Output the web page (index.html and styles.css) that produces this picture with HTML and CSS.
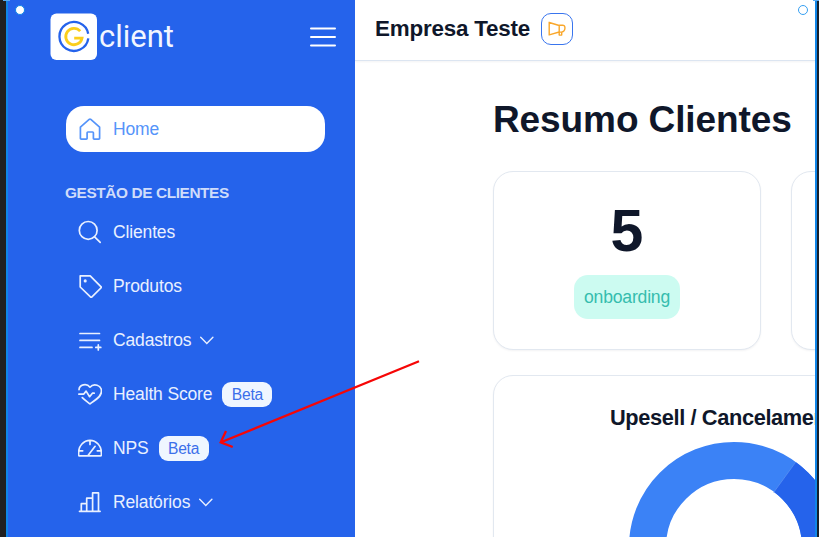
FILE: index.html
```html
<!DOCTYPE html>
<html lang="pt-BR">
<head>
<meta charset="utf-8">
<title>Gclient</title>
<link rel="stylesheet" href="styles.css">
</head>
<body>
<div class="app">
  <aside class="sidebar">
    <div class="brand">
      <svg class="mark" viewBox="0 0 47 47" fill="none">
        <rect x=".5" y=".5" width="46.500" height="46.500" rx="6" fill="#fff"/>
        <path d="M38.200 20.800A14.500 14.500 0 1 0 38.300 25.400" stroke="#2563eb" stroke-width="2.300"/>
        <path d="M30.200 18.200A8.200 8.200 0 1 0 32 25.200H24.200" stroke="#fbce1b" stroke-width="2.800"/>
      </svg>
      <span class="wordmark">client</span>
      <svg class="burger" viewBox="0 0 26 22" stroke="#fff" stroke-width="2" stroke-linecap="round"><path d="M1 2.500h24M1 11h24M1 19.500h24"/></svg>
    </div>
    <nav class="nav">
      <a class="item active">
        <svg class="icon" viewBox="0 0 24 24"><path d="M2.4 10.2 11.2 2.4a1.2 1.2 0 0 1 1.6 0L21.6 10.2v11.1a.8.8 0 0 1-.8.8h-4.6a.8.8 0 0 1-.8-.8v-5.5a.8.8 0 0 0-.8-.8H9.9a.8.8 0 0 0-.8.8v5.5a.8.8 0 0 1-.8.8H3.2a.8.8 0 0 1-.8-.8z"/></svg>
        <span>Home</span>
      </a>
      <h2 class="section">GESTÃO DE CLIENTES</h2>
      <a class="item"><svg class="icon" viewBox="0 0 24 24"><circle cx="10.2" cy="10.4" r="8.9"/><path d="m16.6 16.8 5.6 5.5"/></svg><span>Clientes</span></a>
      <a class="item"><svg class="icon" viewBox="0 0 24 24"><path d="M2.2 1.8h10l11.4 11.5-10.4 10.3L2.2 13z"/><circle cx="7.2" cy="6.9" r=".7"/></svg><span>Produtos</span></a>
      <a class="item"><svg class="icon" viewBox="0 0 24 24"><path d="M2 5.500h19.500M2 12.400h19.500M2 19.400h12M17.800 19.400h5M20.300 16.900v5"/></svg><span>Cadastros</span><svg class="chevron" viewBox="0 0 14 14"><path d="m.7 4.300 6.100 6.100 6.100-6.100"/></svg></a>
      <a class="item"><svg class="icon" viewBox="0 0 24 24"><path d="M1 7.7C1.3 2.700 8.5.700 12 5.2c3.7-4.500 11.5-2.1 11.5 3.9 0 6.2-7.2 9.300-11.5 12.800-2.6-2-5.4-3.8-7.7-6.2M.8 12.2h4.8l2.5-3.1 3.5 5.600 2.8-3.500h1.800"/></svg><span>Health Score</span><b class="badge">Beta</b></a>
      <a class="item"><svg class="icon" viewBox="0 0 24 24"><path d="M1.5 19.8a.9.9 0 0 1-.9-.9v-2C.6 10 5.6 4.3 12 4.3S23.4 10 23.4 16.9v2a.9.9 0 0 1-.9.9zM12 4.5v4M1 14.8h3.7M19.3 14.8H23M10 19.5l7.1-9.2"/></svg><span>NPS</span><b class="badge">Beta</b></a>
      <a class="item"><svg class="icon" viewBox="0 0 24 24"><path d="M1.5 21.3h20.600M3.3 21.3v-7.600h5.4v7.600M8.7 13.7V8.2h5.9v13.1M14.6 8.2V2.9h5.900v18.4"/></svg><span>Relatórios</span><svg class="chevron" viewBox="0 0 14 14"><path d="m.7 4.300 6.100 6.100 6.100-6.100"/></svg></a>
    </nav>
  </aside>
  <main class="main">
    <header class="topbar">
      <strong class="company">Empresa Teste</strong>
      <span class="announce"><svg viewBox="0 0 18 18"><path d="M1.200 1.800v13.800M1.200 2.500 11.200 5.500M1.200 14.800 11.200 12M11.200 4.800v10.300h2.500v-3M11.200 5.200h3.500a2.200 2.200 0 0 1 2.200 2.200v1.200a3.500 3.500 0 0 1-3.500 3.500h-2.200"/></svg></span>
    </header>
    <div class="content">
      <h1 class="title">Resumo Clientes</h1>
      <div class="cards">
        <section class="card stat"><span class="number">5</span><span class="tag">onboarding</span></section>
        <section class="card"></section>
      </div>
      <section class="card chart">
        <h3>Upesell / Cancelamentos</h3>
        <svg class="donut" viewBox="-105 -105 210 210" fill="none" stroke-width="37">
          <circle r="86.5" stroke="#3b82f6"/>
          <path d="M50.8-70A86.5 86.5 0 0 1 86.5 0" stroke="#2563eb"/>
          <path d="m39.7-54.6 22-30.3" stroke="#5990f2" stroke-width=".8"/>
        </svg>
      </section>
    </div>
  </main>
</div>
<div class="selection"></div>
<i class="handle filled"></i><i class="handle hollow"></i>
<svg class="arrow" viewBox="0 0 819 537" fill="none" stroke="#f60606" stroke-width="2.3"><path d="M419 361.300 221 442.300M226 431 220.700 442.300l12 4.700"/></svg>
</body>
</html>
```
FILE: styles.css
```css
* { box-sizing: border-box; }
body { margin: 0; width: 819px; height: 537px; overflow: hidden; position: relative; background: #fff; color: #0f172a; font-family: "Liberation Sans", Arial, sans-serif; }
svg { display: block; flex: none; }
.app { display: flex; height: 537px; padding-left: 6px; overflow: hidden; background: #202020; }
.sidebar { width: 349px; flex: none; background: #2563eb; color: #fff; padding: 13px 18px 0 44px; }
.brand { display: flex; align-items: center; height: 47px; }
.mark { width: 47px; height: 47px; }
.wordmark { font: 400 31px/40px Roboto, sans-serif; margin-left: 2px; width: 76px; white-space: nowrap; color: #f2f6ff; }
.burger { width: 26px; height: 22px; margin-left: auto; margin-right: 1px; }
.nav { padding: 46px 12px 0 16px; display: flex; flex-direction: column; }
.item { height: 46px; margin-bottom: 8px; padding-left: 12px; display: flex; align-items: center; font-size: 17.5px; letter-spacing: -.15px; color: #e9f0ff; white-space: nowrap; }
.icon { width: 24px; height: 24px; margin-right: 11px; fill: none; stroke: currentColor; stroke-width: 1.7; stroke-linejoin: round; stroke-linecap: round; }
.active { background: #fff; color: #5594fa; border-radius: 18px; margin-bottom: 0; }
.section { margin: 31px 0 8px -1px; height: 18px; font-size: 15.4px; letter-spacing: -.4px; line-height: 19px; font-weight: 700; color: #cfdcfa; white-space: nowrap; }
.chevron { width: 14px; height: 14px; margin-left: 9px; fill: none; stroke: currentColor; stroke-width: 1.4; stroke-linecap: round; }
.badge { margin-left: 10px; width: 50px; height: 25px; border-radius: 9px; background: #eff6ff; color: #3b6fea; font-size: 15.6px; letter-spacing: -.25px; font-weight: 400; line-height: 25px; text-align: center; }
.main { width: 464px; flex: none; background: #fff; overflow: hidden; }
.topbar { height: 61px; border-bottom: 1px solid #dce5f1; box-shadow: 0 1px 2px #0f172a0d; display: flex; align-items: center; padding: 0 0 2px 20px; }
.company { font-size: 22.4px; letter-spacing: -.2px; white-space: nowrap; }
.announce { width: 32px; height: 32px; margin-left: 11px; border: 1.500px solid #3975ee; border-radius: 10px; display: grid; place-items: center; }
.announce svg { width: 18px; height: 18px; fill: none; stroke: #f9a72b; stroke-width: 1.4; stroke-linejoin: round; }
.content { padding: 37px 0 0 138px; }
.title { margin: 0; height: 73px; font-size: 37px; letter-spacing: -.1px; line-height: 43px; white-space: nowrap; }
.cards { display: flex; gap: 30px; width: 566px; }
.card { width: 268px; height: 179px; flex: none; border: 1px solid #e2e8f0; border-radius: 20px; background: #fff; box-shadow: 0 1px 2px #0f172a0d; }
.stat { display: flex; flex-direction: column; align-items: center; }
.number { margin-top: 29px; height: 74px; font-size: 59px; line-height: 60px; font-weight: 700; }
.tag { width: 106px; height: 44px; border-radius: 14px; background: #ccfbf1; color: #35bdae; font-size: 17.6px; letter-spacing: -.2px; line-height: 44px; text-align: center; }
.chart { width: 482px; height: 300px; margin-top: 25px; }
.chart h3 { margin: 29px 0 11px; font-size: 21.8px; letter-spacing: -.38px; line-height: 26px; text-align: center; white-space: nowrap; }
.donut { width: 210px; height: 210px; margin: 0 auto; }
.selection { position: absolute; inset: 0 2px 0 6px; border: solid #1086e8; border-width: 0 2px; box-shadow: 2px 0 #17202b; }
.selection::before, .selection::after { content: ""; position: absolute; top: 0; width: 7px; height: 1px; background: #5baaf0; }
.selection::before { left: -5px; }
.selection::after { right: -5px; }
.handle { position: absolute; top: 5px; width: 10px; height: 10px; border-radius: 50%; }
.filled { left: 15px; background: #fff; border: 1.500px solid #1086e8; }
.hollow { left: 798px; border: 1.500px solid #36a0f2; }
.arrow { position: absolute; inset: 0; width: 819px; height: 537px; }
```
